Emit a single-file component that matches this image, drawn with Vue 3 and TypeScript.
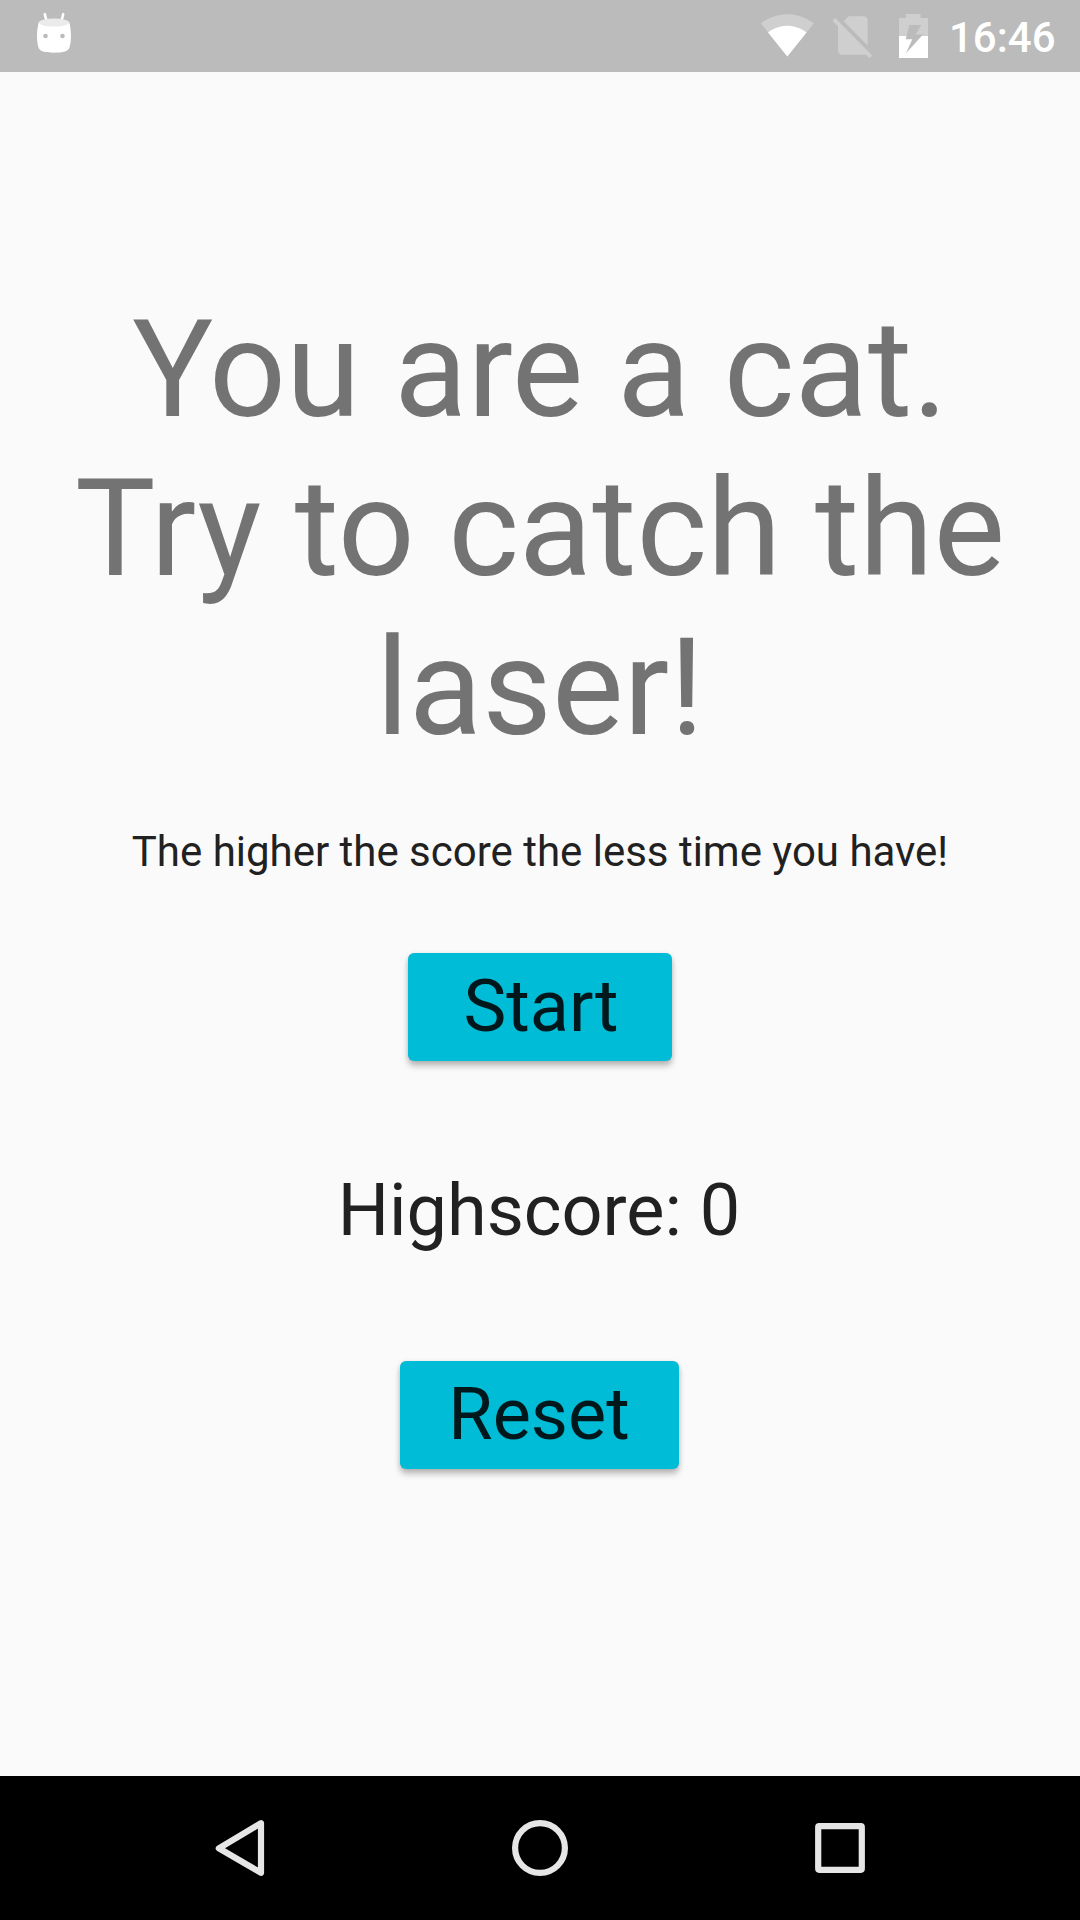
<script setup lang="ts">
import { ref } from 'vue'

const time = ref<string>('16:46')
const highscore = ref<number>(0)

function reset(): void {
  highscore.value = 0
}
</script>

<template>
  <div class="screen">
    <header class="status">
      <svg class="droid" width="36" height="44" viewBox="36 11 36 44">
        <path d="M44.8 14.2l1.8 7M63.2 14.2l-1.8 7" stroke="#fff" stroke-width="2.6" stroke-linecap="round" />
        <path d="M38.8 22c-2 8-2.600 18-.3 25.500 1 3.500 6 5.200 15.500 5.200s14.500-1.700 15.500-5.200c2.300-7.500 1.700-17.500-.3-25.500z" fill="#fff" />
        <ellipse cx="54" cy="22.600" rx="15" ry="4" fill="#ebebeb" />
        <circle cx="45.500" cy="36" r="2.300" fill="#bbb" />
        <circle cx="62.500" cy="36" r="2.300" fill="#bbb" />
      </svg>
      <div class="tray">
        <svg width="320" height="72" viewBox="740 0 320 72" class="signals">
          <defs>
            <clipPath id="battery-empty"><rect x="895" y="10" width="40" height="26" /></clipPath>
            <clipPath id="battery-charged"><rect x="895" y="36" width="40" height="26" /></clipPath>
            <path
              id="battery"
              fill="#fff"
              fill-rule="evenodd"
              d="M899 18h7v-4h14.500v4h7.500v40h-29zM909.300 25l-3.600 14.300h6.600l-6.300 14 17-18.800h-7.400l5.700-9.500z"
            />
          </defs>
          <g transform="translate(760.060 7.450) scale(2.270 2.280)" fill="#fff">
            <path opacity=".3" d="M12.010 21.490L23.640 7c-.45-.34-4.930-4-11.640-4C5.280 3 .81 6.660.36 7l11.630 14.490.01.01.01-.01z" />
            <path d="M3.530 10.950l8.460 10.540.01.01.01-.01 8.460-10.540C20.040 10.620 16.810 8 12 8c-4.810 0-8.040 2.620-8.470 2.950z" />
          </g>
          <g transform="translate(827.400 9.800) scale(2.120 2.140)" fill="#fff" opacity=".3">
            <path d="M18.990 5c0-1.100-.89-2-1.990-2h-7L7.660 5.340 19 16.680 18.990 5zM3.650 3.880L2.380 5.150 5 7.770V19c0 1.100.9 2 2 2h10.010c.35 0 .67-.1.96-.26l1.880 1.880 1.270-1.270L3.650 3.880z" />
          </g>
          <g clip-path="url(#battery-empty)" opacity=".3"><use href="#battery" /></g>
          <g clip-path="url(#battery-charged)"><use href="#battery" /></g>
        </svg>
        <span class="time">{{ time }}</span>
      </div>
    </header>

    <main class="content">
      <h1 class="title">You are a cat.<br />Try to catch the<br />laser!</h1>
      <p class="hint">The higher the score the less time you have!</p>
      <button class="btn start" type="button">Start</button>
      <p class="score">Highscore: {{ highscore }}</p>
      <button class="btn reset" type="button" @click="reset">Reset</button>
    </main>

    <nav class="nav">
      <svg width="60" height="60" viewBox="-30 -30 60 60">
        <path d="M21 -24.800V24.800L-21.200 0.300z" />
      </svg>
      <svg width="60" height="60" viewBox="-30 -30 60 60">
        <circle r="24.900" />
      </svg>
      <svg width="60" height="60" viewBox="-30 -30 60 60">
        <rect x="-21.800" y="-21.800" width="43.600" height="43.600" rx="1" />
      </svg>
    </nav>
  </div>
</template>

<style>
body {
  margin: 0;
}
</style>

<style scoped>
.screen {
  display: flex;
  flex-direction: column;
  width: 1080px;
  height: 1920px;
  overflow: hidden;
  background: #fafafa;
  font-family: Roboto, "Noto Sans", sans-serif;
}

.status {
  display: flex;
  justify-content: space-between;
  flex: none;
  height: 72px;
  background: #bbb;
}

.droid {
  margin: 11px 0 0 36px;
}

.tray {
  display: flex;
  padding-right: 26px;
}

.signals {
  width: 320px;
  margin-right: -111px;
}

.time {
  width: 105px;
  color: #fff;
  font-size: 42px;
  font-weight: 500;
  line-height: 76px;
  white-space: nowrap;
}

.content {
  display: flex;
  flex: 1;
  flex-direction: column;
  align-items: center;
  color: #212121;
}

.title {
  margin: 219px 0 0;
  color: #737373;
  font-size: 135px;
  font-weight: 400;
  line-height: 159px;
  text-align: center;
  white-space: nowrap;
}

.hint {
  margin: 59px 0 0;
  font-size: 42px;
  letter-spacing: -0.01px;
  line-height: 49px;
  white-space: nowrap;
}

.btn {
  height: 108px;
  padding: 0;
  border: 0;
  border-radius: 6px;
  background: #00bcd7;
  box-shadow: 0 5px 6px rgba(0, 0, 0, 0.24), 0 1px 5px rgba(0, 0, 0, 0.1);
  color: rgba(0, 0, 0, 0.87);
  font: inherit;
  font-size: 72px;
  line-height: 108px;
}

.start {
  width: 264px;
  margin-top: 77px;
  padding-left: 2px;
}

.score {
  margin: 108px 0 0;
  padding-right: 2px;
  font-size: 72px;
  line-height: 84px;
  white-space: nowrap;
}

.reset {
  width: 279px;
  margin-top: 108px;
  margin-right: 1px;
  padding-right: 1px;
}

.nav {
  display: flex;
  align-items: center;
  justify-content: space-between;
  flex: none;
  height: 144px;
  padding: 0 210px;
  box-sizing: border-box;
  background: #000;
}

.nav svg {
  fill: none;
  stroke: #e6e6e6;
  stroke-width: 6.200;
  stroke-linejoin: round;
}
</style>
